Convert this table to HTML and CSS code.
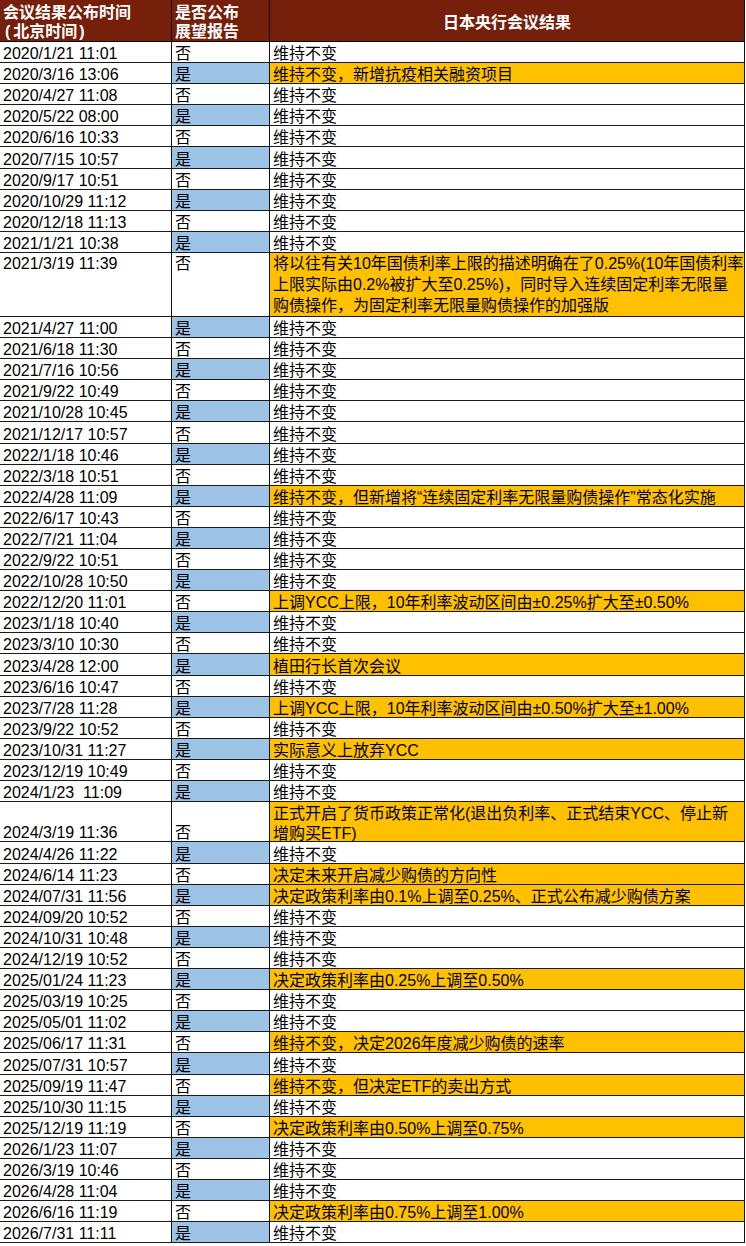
FILE: index.html
```html
<!DOCTYPE html>
<html lang="zh-CN">
<head>
<meta charset="utf-8">
<title>日本央行会议结果</title>
<link rel="stylesheet" href="styles.css">
</head>
<body>
<div class="sheet">
  <div class="row head">
    <div class="c h1">会议结果公布时间<br><span class="par">(</span>北京时间<span class="par">)</span></div>
    <div class="c h2">是否公布<br>展望报告</div>
    <div class="c h3">日本央行会议结果</div>
  </div>

  <div class="row"><div class="c d">2020/1/21 11:01</div><div class="c f">否</div><div class="c t">维持不变</div></div>
  <div class="row"><div class="c d">2020/3/16 13:06</div><div class="c f y">是</div><div class="c t o">维持不变，新增抗疫相关融资项目</div></div>
  <div class="row"><div class="c d">2020/4/27 11:08</div><div class="c f">否</div><div class="c t">维持不变</div></div>
  <div class="row"><div class="c d">2020/5/22 08:00</div><div class="c f y">是</div><div class="c t">维持不变</div></div>
  <div class="row"><div class="c d">2020/6/16 10:33</div><div class="c f">否</div><div class="c t">维持不变</div></div>
  <div class="row"><div class="c d">2020/7/15 10:57</div><div class="c f y">是</div><div class="c t">维持不变</div></div>
  <div class="row"><div class="c d">2020/9/17 10:51</div><div class="c f">否</div><div class="c t">维持不变</div></div>
  <div class="row"><div class="c d">2020/10/29 11:12</div><div class="c f y">是</div><div class="c t">维持不变</div></div>
  <div class="row"><div class="c d">2020/12/18 11:13</div><div class="c f">否</div><div class="c t">维持不变</div></div>
  <div class="row"><div class="c d">2021/1/21 10:38</div><div class="c f y">是</div><div class="c t">维持不变</div></div>
  <div class="row tall3"><div class="c d top">2021/3/19 11:39</div><div class="c f top">否</div><div class="c t o multi3">将以往有关10年国债利率上限的描述明确在了0.25%(10年国债利率<br>上限实际由0.2%被扩大至0.25%)，同时导入连续固定利率无限量<br>购债操作，为固定利率无限量购债操作的加强版</div></div>
  <div class="row"><div class="c d">2021/4/27 11:00</div><div class="c f y">是</div><div class="c t">维持不变</div></div>
  <div class="row"><div class="c d">2021/6/18 11:30</div><div class="c f">否</div><div class="c t">维持不变</div></div>
  <div class="row"><div class="c d">2021/7/16 10:56</div><div class="c f y">是</div><div class="c t">维持不变</div></div>
  <div class="row"><div class="c d">2021/9/22 10:49</div><div class="c f">否</div><div class="c t">维持不变</div></div>
  <div class="row"><div class="c d">2021/10/28 10:45</div><div class="c f y">是</div><div class="c t">维持不变</div></div>
  <div class="row"><div class="c d">2021/12/17 10:57</div><div class="c f">否</div><div class="c t">维持不变</div></div>
  <div class="row"><div class="c d">2022/1/18 10:46</div><div class="c f y">是</div><div class="c t">维持不变</div></div>
  <div class="row"><div class="c d">2022/3/18 10:51</div><div class="c f">否</div><div class="c t">维持不变</div></div>
  <div class="row"><div class="c d">2022/4/28 11:09</div><div class="c f y">是</div><div class="c t o">维持不变，但新增将“连续固定利率无限量购债操作”常态化实施</div></div>
  <div class="row"><div class="c d">2022/6/17 10:43</div><div class="c f">否</div><div class="c t">维持不变</div></div>
  <div class="row"><div class="c d">2022/7/21 11:04</div><div class="c f y">是</div><div class="c t">维持不变</div></div>
  <div class="row"><div class="c d">2022/9/22 10:51</div><div class="c f">否</div><div class="c t">维持不变</div></div>
  <div class="row"><div class="c d">2022/10/28 10:50</div><div class="c f y">是</div><div class="c t">维持不变</div></div>
  <div class="row"><div class="c d">2022/12/20 11:01</div><div class="c f">否</div><div class="c t o">上调YCC上限，10年利率波动区间由±0.25%扩大至±0.50%</div></div>
  <div class="row"><div class="c d">2023/1/18 10:40</div><div class="c f y">是</div><div class="c t">维持不变</div></div>
  <div class="row"><div class="c d">2023/3/10 10:30</div><div class="c f">否</div><div class="c t">维持不变</div></div>
  <div class="row"><div class="c d">2023/4/28 12:00</div><div class="c f y">是</div><div class="c t o">植田行长首次会议</div></div>
  <div class="row"><div class="c d">2023/6/16 10:47</div><div class="c f">否</div><div class="c t">维持不变</div></div>
  <div class="row"><div class="c d">2023/7/28 11:28</div><div class="c f y">是</div><div class="c t o">上调YCC上限，10年利率波动区间由±0.50%扩大至±1.00%</div></div>
  <div class="row"><div class="c d">2023/9/22 10:52</div><div class="c f">否</div><div class="c t">维持不变</div></div>
  <div class="row"><div class="c d">2023/10/31 11:27</div><div class="c f y">是</div><div class="c t o">实际意义上放弃YCC</div></div>
  <div class="row"><div class="c d">2023/12/19 10:49</div><div class="c f">否</div><div class="c t">维持不变</div></div>
  <div class="row"><div class="c d">2024/1/23  11:09</div><div class="c f y">是</div><div class="c t">维持不变</div></div>
  <div class="row tall2"><div class="c d">2024/3/19 11:36</div><div class="c f">否</div><div class="c t o multi2"><span class="txt">正式开启了货币政策正常化(退出负利率、正式结束YCC、停止新<br>增购买ETF)</span></div></div>
  <div class="row"><div class="c d">2024/4/26 11:22</div><div class="c f y">是</div><div class="c t">维持不变</div></div>
  <div class="row"><div class="c d">2024/6/14 11:23</div><div class="c f">否</div><div class="c t o">决定未来开启减少购债的方向性</div></div>
  <div class="row"><div class="c d">2024/07/31 11:56</div><div class="c f y">是</div><div class="c t o">决定政策利率由0.1%上调至0.25%、正式公布减少购债方案</div></div>
  <div class="row"><div class="c d">2024/09/20 10:52</div><div class="c f">否</div><div class="c t">维持不变</div></div>
  <div class="row"><div class="c d">2024/10/31 10:48</div><div class="c f y">是</div><div class="c t">维持不变</div></div>
  <div class="row"><div class="c d">2024/12/19 10:52</div><div class="c f">否</div><div class="c t">维持不变</div></div>
  <div class="row"><div class="c d">2025/01/24 11:23</div><div class="c f y">是</div><div class="c t o">决定政策利率由0.25%上调至0.50%</div></div>
  <div class="row"><div class="c d">2025/03/19 10:25</div><div class="c f">否</div><div class="c t">维持不变</div></div>
  <div class="row"><div class="c d">2025/05/01 11:02</div><div class="c f y">是</div><div class="c t">维持不变</div></div>
  <div class="row"><div class="c d">2025/06/17 11:31</div><div class="c f">否</div><div class="c t o">维持不变，决定2026年度减少购债的速率</div></div>
  <div class="row"><div class="c d">2025/07/31 10:57</div><div class="c f y">是</div><div class="c t">维持不变</div></div>
  <div class="row"><div class="c d">2025/09/19 11:47</div><div class="c f">否</div><div class="c t o">维持不变，但决定ETF的卖出方式</div></div>
  <div class="row"><div class="c d">2025/10/30 11:15</div><div class="c f y">是</div><div class="c t">维持不变</div></div>
  <div class="row"><div class="c d">2025/12/19 11:19</div><div class="c f">否</div><div class="c t o">决定政策利率由0.50%上调至0.75%</div></div>
  <div class="row"><div class="c d">2026/1/23 11:07</div><div class="c f y">是</div><div class="c t">维持不变</div></div>
  <div class="row"><div class="c d">2026/3/19 10:46</div><div class="c f">否</div><div class="c t">维持不变</div></div>
  <div class="row"><div class="c d">2026/4/28 11:04</div><div class="c f y">是</div><div class="c t">维持不变</div></div>
  <div class="row"><div class="c d">2026/6/16 11:19</div><div class="c f">否</div><div class="c t o">决定政策利率由0.75%上调至1.00%</div></div>
  <div class="row"><div class="c d">2026/7/31 11:11</div><div class="c f y">是</div><div class="c t">维持不变</div></div>
</div>
</body>
</html>
```

FILE: styles.css
```css
html, body {
  margin: 0;
  padding: 0;
  background: #ffffff;
}

body {
  font-family: "Liberation Sans", "Noto Sans CJK SC", sans-serif;
  font-size: 16px;
  color: #000000;
}

.sheet {
  width: 745px;
}

.row {
  display: grid;
  grid-template-columns: 172px 98px 475px;
  height: 21.1px;
}

.row.head {
  height: 42px;
  background: #761f0a;
  color: #ffffff;
  font-weight: bold;
}

.row.tall3 {
  height: 64px;
}

.row.tall2 {
  height: 40.4px;
}

.c {
  box-sizing: border-box;
  border-right: 1px solid #111111;
  border-bottom: 1px solid #1a1a1a;
  display: flex;
  align-items: flex-end;
  padding-left: 3px;
  line-height: 16px;
  white-space: pre;
  overflow: visible;
}

.c.top {
  align-items: flex-start;
  line-height: 21px;
}

.head .c {
  display: block;
  line-height: 19px;
  white-space: normal;
  padding-top: 3px;
  border-bottom-color: #000000;
}

.head .par {
  display: inline-block;
  padding: 0 3px 0 2px;
}

.head .h3 {
  display: flex;
  justify-content: center;
  align-items: center;
  padding: 4px 0 0 0;
}

.f.y {
  background: #9dc3e6;
}

.t.o {
  background: #ffc000;
}

.t.multi3 {
  align-items: flex-start;
  line-height: 21px;
  white-space: normal;
}

.t.multi2 {
  line-height: 20px;
  white-space: normal;
}

.t.multi2 .txt {
  margin-bottom: -3px;
}
```
